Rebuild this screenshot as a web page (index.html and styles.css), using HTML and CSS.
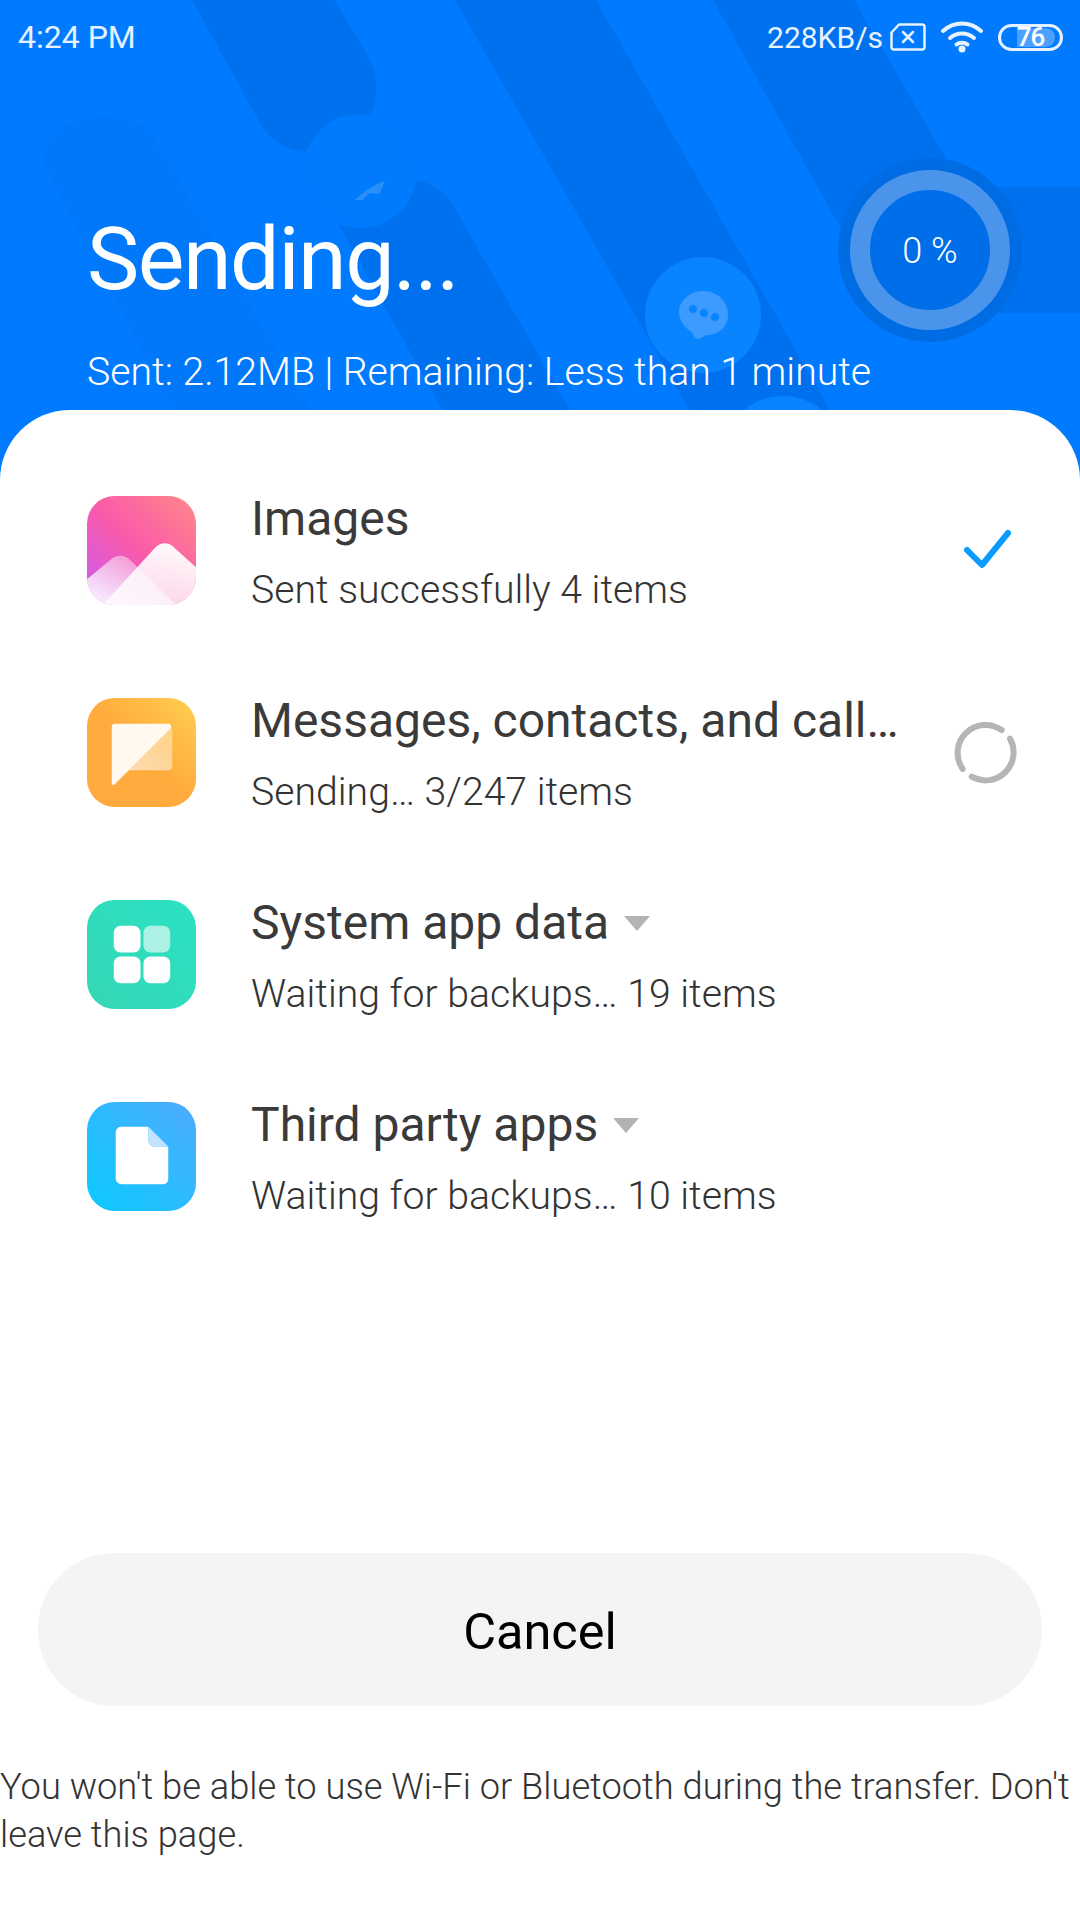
FILE: index.html
```html
<!DOCTYPE html>
<html lang="en">
<head>
    <meta charset="UTF-8">
    <meta name="viewport" content="width=device-width, initial-scale=1.0">
    <title>Sending</title>
    <link rel="stylesheet" href="styles.css">
</head>
<body>
    <div class="hero">
        <!-- background stripes and floating bubbles -->
        <svg class="hero-bg" width="1080" height="480" viewBox="0 0 1080 480">
            <path d="M45 167C40 135 70 117 103 117C130 117 148 125 158 143L350 480H210Z" fill="#0078f9"/>
            <path d="M192 0H335L370 60C382 85 378 115 355 135C340 148 320 153 305 152C285 150 270 140 260 123Z" fill="#0071ee"/>
            <path d="M340 227C340 200 370 180 400 178C425 178 445 190 454 207L610 480H482Z" fill="#0071ee"/>
            <path d="M455 0H596L870 480H729Z" fill="#0071ee"/>
            <path d="M713 0H854L947 160L930 250L840 227Z" fill="#0071ee"/>
            <rect x="930" y="187" width="150" height="126" fill="#0071ee"/>
            <circle cx="930" cy="250" r="92" fill="#006ce4"/>
            <circle cx="360" cy="171" r="57" fill="#007bfe"/>
            <path d="M355 200C364 191 375 184 385 181L380 193L377 194L370 193L365 197L363 200Z" fill="#2b8ff9"/>
            <circle cx="703" cy="315" r="58" fill="#0884ff"/>
            <circle cx="783" cy="458" r="62" fill="#0884ff"/>
            <path d="M703 291C718 291 728 302 728 315C728 329 716 335 707 335C703 336 701 339 697 339C694 338 693 335 692 332C684 328 679 320 679 311C680 300 690 291 703 291Z" fill="#3d9bff"/>
            <circle cx="693" cy="309" r="4" fill="#0884ff"/>
            <circle cx="704" cy="313" r="4" fill="#0884ff"/>
            <circle cx="715" cy="317" r="4" fill="#0884ff"/>
        </svg>

        <div class="status-bar">
            <span class="status-time">4:24 PM</span>
            <div class="status-right">
                <span class="status-speed">228KB/s</span>
                <svg class="sim-icon" width="36" height="28" viewBox="0 0 36 28" fill="none" stroke="#e6f2ff" stroke-width="2.500" stroke-linejoin="round">
                    <path d="M9 1.500H32C33.500 1.500 34.500 2.500 34.500 4V24C34.500 25.500 33.500 26.500 32 26.500H4C2.500 26.500 1.500 25.500 1.500 24V9.500Z"/>
                    <path d="M13 9L23 19M23 9L13 19" stroke-linecap="round"/>
                </svg>
                <svg class="wifi-icon" width="42" height="32" viewBox="0 0 42 32" fill="none" stroke="#e6f2ff" stroke-width="4" stroke-linecap="round">
                    <path d="M2 10C13 0 29 0 40 10"/>
                    <path d="M9 17C16 11 26 11 33 17"/>
                    <path d="M15.500 23.500C18.500 21 23.500 21 26.500 23.500"/>
                    <circle cx="21" cy="28" r="3.500" fill="#e6f2ff" stroke="none"/>
                </svg>
                <div class="battery">
                    <span class="battery-fill"></span>
                    <span class="battery-level">76</span>
                </div>
            </div>
        </div>

        <div class="hero-text">
            <h1>Sending...</h1>
            <p>Sent: 2.12MB | Remaining: Less than 1 minute</p>
        </div>

        <div class="progress-ring">0 %</div>
    </div>

    <div class="sheet">
        <div class="task-list">
            <div class="task">
                <svg class="task-icon" width="109" height="109" viewBox="0 0 110 110">
                    <defs>
                        <linearGradient id="imgBg" x1="1" y1="0" x2="0" y2="1">
                            <stop offset="0" stop-color="#ff8a8a"/>
                            <stop offset=".5" stop-color="#fb5aa8"/>
                            <stop offset="1" stop-color="#c95cf5"/>
                        </linearGradient>
                        <linearGradient id="imgPeak" x1="1" y1="0" x2="0" y2="1">
                            <stop offset=".15" stop-color="#fff" stop-opacity=".3"/>
                            <stop offset=".85" stop-color="#fff" stop-opacity=".85"/>
                        </linearGradient>
                        <linearGradient id="imgPeakBig" x1=".6" y1="0" x2=".4" y2="1">
                            <stop offset="0" stop-color="#fff" stop-opacity=".95"/>
                            <stop offset="1" stop-color="#fff" stop-opacity=".75"/>
                        </linearGradient>
                        <clipPath id="imgClip"><rect width="110" height="110" rx="28"/></clipPath>
                    </defs>
                    <g clip-path="url(#imgClip)">
                        <rect width="110" height="110" fill="url(#imgBg)"/>
                        <path d="M0 84L24 64C30 59 38 59 44 65L90 110H0Z" fill="url(#imgPeak)"/>
                        <path d="M16 110L68 53C74 46 83 46 89 53L110 72V110Z" fill="url(#imgPeakBig)"/>
                    </g>
                </svg>
                <div class="task-text">
                    <div class="task-title">Images</div>
                    <div class="task-sub">Sent successfully 4 items</div>
                </div>
                <svg class="task-state" width="64" height="64" viewBox="0 0 64 64" fill="none" stroke="#0a9bff" stroke-width="6" stroke-linecap="round" stroke-linejoin="round">
                    <path d="M13 31L28 46L54 14"/>
                </svg>
            </div>

            <div class="task">
                <svg class="task-icon" width="109" height="109" viewBox="0 0 110 110">
                    <defs>
                        <linearGradient id="msgBg" x1="1" y1="0" x2="0" y2="1">
                            <stop offset="0" stop-color="#ffcf4f"/>
                            <stop offset=".5" stop-color="#ffab3d"/>
                            <stop offset="1" stop-color="#ffa940"/>
                        </linearGradient>
                        <linearGradient id="msgFold" x1="1" y1="0" x2="0" y2="1">
                            <stop offset="0" stop-color="#fff" stop-opacity=".35"/>
                            <stop offset="1" stop-color="#fff" stop-opacity=".7"/>
                        </linearGradient>
                    </defs>
                    <rect width="110" height="110" rx="28" fill="url(#msgBg)"/>
                    <path d="M84 30C85 30 86 31 86 33V69C86 71 85 73 83 73H42L27 88L84 30Z" fill="url(#msgFold)"/>
                    <path d="M28 26H83C84 26 85 28 85 30L27 88C26 88 25 87 25 86V29C25 27 26 26 28 26Z" fill="#fff9f0"/>
                </svg>
                <div class="task-text">
                    <div class="task-title">Messages, contacts, and call…</div>
                    <div class="task-sub">Sending… 3/247 items</div>
                </div>
                <svg class="task-state" width="64" height="64" viewBox="0 0 64 64" fill="none" stroke="#b5b5b5" stroke-width="6" stroke-linecap="round">
                    <path d="M47.700 9A28 28 0 0 0 8.700 48"/>
                    <path d="M17.700 55.700A28 28 0 0 0 56 17.700"/>
                </svg>
            </div>

            <div class="task">
                <svg class="task-icon" width="109" height="109" viewBox="0 0 110 110">
                    <defs>
                        <linearGradient id="sysBg" x1="1" y1="0" x2="0" y2="1">
                            <stop offset="0" stop-color="#2ae2c4"/>
                            <stop offset="1" stop-color="#36d6b4"/>
                        </linearGradient>
                    </defs>
                    <rect width="110" height="110" rx="28" fill="url(#sysBg)"/>
                    <rect x="27" y="26" width="27" height="27" rx="7" fill="#fff"/>
                    <rect x="57" y="26" width="27" height="27" rx="7" fill="#fff" fill-opacity=".6"/>
                    <rect x="27" y="57" width="27" height="27" rx="7" fill="#fff"/>
                    <rect x="57" y="57" width="27" height="27" rx="7" fill="#fff"/>
                </svg>
                <div class="task-text">
                    <div class="task-title">System app data<span class="caret"></span></div>
                    <div class="task-sub">Waiting for backups… 19 items</div>
                </div>
            </div>

            <div class="task">
                <svg class="task-icon" width="109" height="109" viewBox="0 0 110 110">
                    <defs>
                        <linearGradient id="fileBg" x1="1" y1="0" x2="0" y2="1">
                            <stop offset="0" stop-color="#4fabff"/>
                            <stop offset="1" stop-color="#0acaff"/>
                        </linearGradient>
                    </defs>
                    <rect width="110" height="110" rx="28" fill="url(#fileBg)"/>
                    <path d="M35 25H62V39C62 42 65 45 68 45H82V77C82 81 80 83 77 83H35C32 83 29 81 29 77V31C29 27 32 25 35 25Z" fill="#fff"/>
                    <path d="M62 25L82 45H68C65 45 62 42 62 39Z" fill="#c2e3ff"/>
                </svg>
                <div class="task-text">
                    <div class="task-title">Third party apps<span class="caret"></span></div>
                    <div class="task-sub">Waiting for backups… 10 items</div>
                </div>
            </div>
        </div>

        <button class="cancel-btn" type="button">Cancel</button>
        <p class="notice">You won't be able to use Wi-Fi or Bluetooth during the transfer. Don't leave this page.</p>
    </div>
</body>
</html>
```

FILE: styles.css
```css
* {
    box-sizing: border-box;
}
html, body {
    margin: 0;
    padding: 0;
}
body {
    width: 1080px;
    height: 1920px;
    overflow: hidden;
    background-color: white;
    font-family: Roboto, "Noto Sans", sans-serif;
}
.hero {
    position: relative;
    height: 480px;
    background-color: #007bff;
    color: white;
    overflow: hidden;
}
.hero-bg {
    position: absolute;
    left: 0;
    top: 0;
}
.status-bar {
    position: relative;
    display: flex;
    justify-content: space-between;
    align-items: center;
    height: 74px;
    padding: 0 17px 0 18px;
    color: #e6f2ff;
}
.status-time {
    font-size: 32px;
}
.status-speed {
    font-size: 30px;
}
.status-right {
    display: flex;
    align-items: center;
}
.sim-icon {
    margin-left: 7px;
}
.wifi-icon {
    margin-left: 15px;
}
.battery {
    position: relative;
    width: 65px;
    height: 27px;
    margin-left: 15px;
    border: 3px solid #e6f2ff;
    border-radius: 14px;
}
.battery-fill {
    position: absolute;
    left: 16px;
    top: 1px;
    width: 38px;
    height: 19px;
    background-color: #4da0ff;
    border-radius: 0 9px 9px 0;
}
.battery-level {
    position: absolute;
    left: 0;
    right: 0;
    top: -3px;
    text-align: center;
    font-size: 26px;
    line-height: 27px;
    font-weight: 500;
    letter-spacing: -1px;
    color: #fff;
}
.hero-text {
    position: relative;
    padding: 135px 0 0 87px;
}
.hero-text h1 {
    margin: 0;
    font-size: 88px;
    line-height: 100px;
    font-weight: 400;
    letter-spacing: -1.5px;
}
.hero-text p {
    margin: 41px 0 0;
    font-size: 39.2px;
    line-height: 44px;
    font-weight: 300;
}
.progress-ring {
    position: absolute;
    left: 850px;
    top: 170px;
    width: 160px;
    height: 160px;
    display: flex;
    align-items: center;
    justify-content: center;
    padding-top: 2px;
    border: 20px solid #4a94ec;
    border-radius: 50%;
    background-color: #006ee8;
    font-size: 36px;
    font-weight: 300;
}
.sheet {
    position: relative;
    height: 1510px;
    margin-top: -70px;
    padding-top: 86px;
    background-color: white;
    border-radius: 70px 70px 0 0;
}
.task-list {
    display: flex;
    flex-direction: column;
    gap: 93px;
    height: 1057px;
    padding: 0 62px 0 87px;
}
.task {
    display: flex;
    align-items: center;
    height: 109px;
}
.task-icon {
    flex-shrink: 0;
    margin-right: 55px;
}
.task-text {
    flex: 1;
    min-width: 0;
    padding-top: 3px;
    white-space: nowrap;
}
.task-title {
    display: flex;
    align-items: center;
    font-size: 48px;
    line-height: 52px;
    color: #3a3a3a;
}
.task-sub {
    margin-top: 24px;
    font-size: 39.2px;
    line-height: 42px;
    font-weight: 300;
    color: #333;
}
.caret {
    width: 0;
    height: 0;
    margin-left: 15px;
    border-left: 13px solid transparent;
    border-right: 13px solid transparent;
    border-top: 15px solid #b3b3b3;
}
.task-state {
    flex-shrink: 0;
}
.cancel-btn {
    display: block;
    width: 1004px;
    height: 153px;
    margin: 0 38px;
    padding-top: 4px;
    border: none;
    border-radius: 76px;
    background-color: #f4f4f4;
    font-family: inherit;
    font-size: 50.5px;
    color: #000;
}
.notice {
    margin: 57px 0 0;
    font-size: 36.25px;
    line-height: 48px;
    font-weight: 300;
    color: #333;
}
```
